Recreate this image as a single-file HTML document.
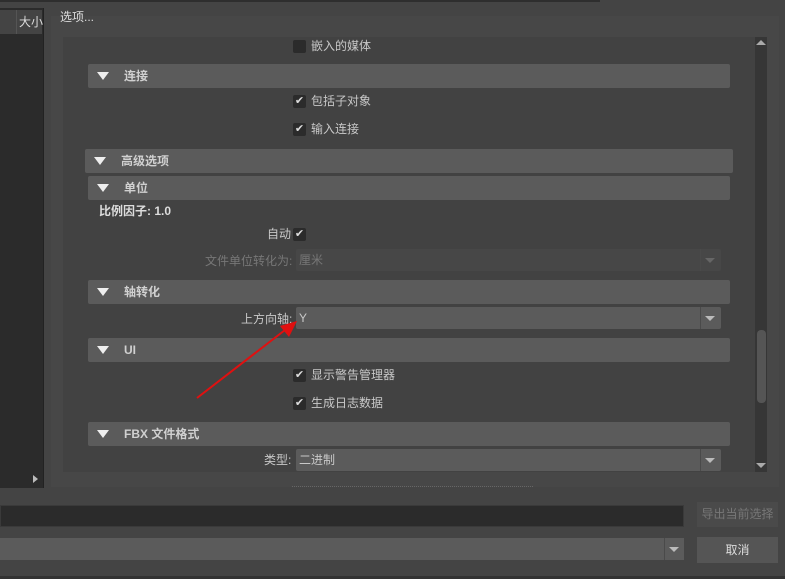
<!DOCTYPE html>
<html><head><meta charset="utf-8"><style>
*{margin:0;padding:0;box-sizing:border-box}
body{width:785px;height:579px;background:#444;font-family:"Liberation Sans","Noto Sans CJK SC",sans-serif;font-size:12px;color:#c8c8c8;position:relative;overflow:hidden}
.a{position:absolute}
.hdr{position:absolute;left:88px;width:642px;height:24px;background:#5b5b5b;border-radius:2px;font-weight:bold;color:#d0d0d0;line-height:24px;padding-left:36px}
.hdr:before{content:"";position:absolute;left:9px;top:8px;border-left:6px solid transparent;border-right:6px solid transparent;border-top:8px solid #eee}
.cb{position:absolute;width:13px;height:13px;background:#2b2b2b;border-radius:2px;color:#ddd;font-size:11px;line-height:13px;text-align:center}
.lbl{position:absolute;line-height:16px}
.dd{position:absolute;left:296px;width:425px;height:22px;background:#5b5b5b;border-radius:2px;line-height:22px;padding-left:3px}
.dd:after{content:"";position:absolute;right:0;top:0;width:20px;height:22px;border-left:1px solid #4a4a4a}
.dd i{position:absolute;right:6px;top:9px;border-left:5px solid transparent;border-right:5px solid transparent;border-top:5px solid #bbb;z-index:2}
</style></head><body>
<div class="a" style="left:0;top:0;width:600px;height:2px;background:#2e2e2e"></div>
<div class="a" style="left:0;top:8px;width:44px;height:480px;background:#2b2b2b;border-right:1px solid #222"></div>
<div class="a" style="left:0;top:10px;width:42px;height:24px;background:#444"></div>
<div class="a" style="left:16px;top:10px;width:1px;height:24px;background:#555"></div>
<div class="lbl" style="left:19px;top:14px;color:#ddd">大小</div>
<div class="a" style="left:33px;top:475px;border-top:4px solid transparent;border-bottom:4px solid transparent;border-left:5px solid #bbb"></div>
<div class="a" style="left:51px;top:16px;width:728px;height:471px;background:#474747"></div>
<div class="lbl" style="left:60px;top:9px;color:#ddd">选项...</div>
<div class="a" style="left:63px;top:37px;width:704px;height:435px;background:#424242"></div>
<div class="a" style="left:755px;top:37px;width:12px;height:435px;background:#363636"></div>
<div class="a" style="left:757px;top:330px;width:9px;height:73px;background:#555;border-radius:4px"></div>
<div class="a" style="left:756px;top:40px;border-left:5px solid transparent;border-right:5px solid transparent;border-bottom:5px solid #aaa"></div>
<div class="a" style="left:756px;top:463px;border-left:5px solid transparent;border-right:5px solid transparent;border-top:5px solid #aaa"></div>

<div class="cb" style="left:293px;top:40px"></div><div class="lbl" style="left:311px;top:38px">嵌入的媒体</div>
<div class="hdr" style="top:64px">连接</div>
<div class="cb" style="left:293px;top:95px">✔</div><div class="lbl" style="left:311px;top:93px">包括子对象</div>
<div class="cb" style="left:293px;top:123px">✔</div><div class="lbl" style="left:311px;top:121px">输入连接</div>
<div class="hdr" style="top:149px;left:85px;width:648px">高级选项</div>
<div class="hdr" style="top:176px">单位</div>
<div class="lbl" style="left:99px;top:203px;font-weight:bold;color:#ddd">比例因子: 1.0</div>
<div class="lbl" style="left:267px;top:226px">自动</div><div class="cb" style="left:293px;top:228px">✔</div>
<div class="lbl" style="left:205px;top:253px;color:#777">文件单位转化为:</div>
<div class="dd" style="top:249px;background:#474747;color:#777">厘米<i style="border-top-color:#666"></i></div>
<div class="hdr" style="top:280px">轴转化</div>
<div class="lbl" style="left:241px;top:311px">上方向轴:</div>
<div class="dd" style="top:307px">Y<i></i></div>
<div class="hdr" style="top:338px">UI</div>
<div class="cb" style="left:293px;top:369px">✔</div><div class="lbl" style="left:311px;top:367px">显示警告管理器</div>
<div class="cb" style="left:293px;top:397px">✔</div><div class="lbl" style="left:311px;top:395px">生成日志数据</div>
<div class="hdr" style="top:422px">FBX 文件格式</div>
<div class="lbl" style="left:264px;top:452px">类型:</div>
<div class="dd" style="top:449px">二进制<i></i></div>
<svg class="a" style="left:0;top:0" width="785" height="579"><line x1="197" y1="398" x2="285" y2="330" stroke="#e01010" stroke-width="2"/><polygon points="297,321 280,326 289,337" fill="#e01010"/><line x1="292" y1="486.5" x2="534" y2="486.5" stroke="#666" stroke-dasharray="1 1"/></svg>
<div class="a" style="left:0;top:505px;width:684px;height:22px;background:#2b2b2b;border:1px solid #3a3a3a"></div>
<div class="a" style="left:697px;top:502px;width:81px;height:25px;background:#4a4a4a;color:#777;text-align:center;line-height:25px">导出当前选择</div>
<div class="a" style="left:0;top:538px;width:684px;height:22px;background:#5b5b5b"></div>
<div class="a" style="left:664px;top:538px;width:1px;height:22px;background:#4a4a4a"></div>
<div class="a" style="left:669px;top:547px;border-left:5px solid transparent;border-right:5px solid transparent;border-top:5px solid #bbb"></div>
<div class="a" style="left:697px;top:537px;width:81px;height:26px;background:#555;color:#ddd;text-align:center;line-height:26px">取消</div>
<div class="a" style="left:0;top:576px;width:785px;height:3px;background:#333"></div>
</body></html>
